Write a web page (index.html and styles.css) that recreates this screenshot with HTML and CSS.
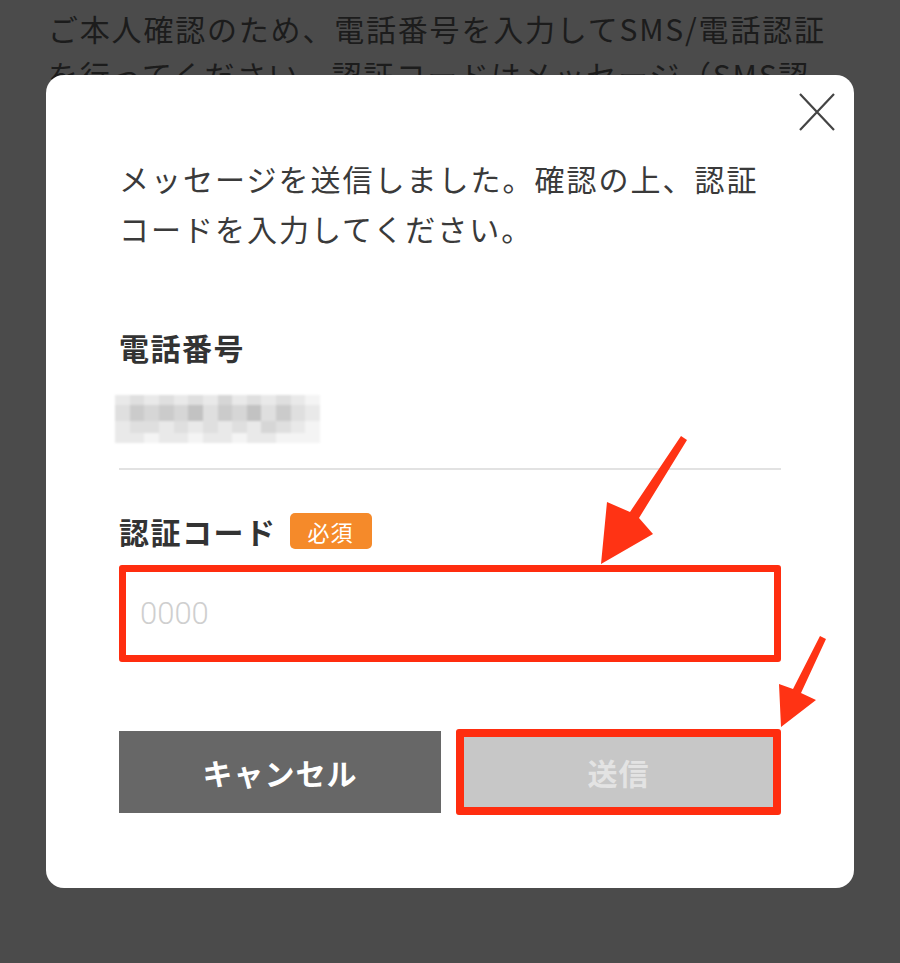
FILE: index.html
```html
<!DOCTYPE html>
<html lang="ja">
<head>
<meta charset="utf-8">
<title>認証コード入力</title>
<link rel="stylesheet" href="styles.css">
</head>
<body>
<div class="page">
  <p class="bg-text">ご本人確認のため、電話番号を入力してSMS/電話認証<br>を行ってください。認証コードはメッセージ（SMS認<br>証）または音声電話でお知らせします。</p>
</div>

<div class="modal">
  <button class="close" aria-label="閉じる">
    <svg width="38" height="40" viewBox="0 0 38 40"><path d="M2 2 L36 38 M36 2 L2 38" stroke="#444" stroke-width="2.2" fill="none"/></svg>
  </button>
  <p class="message">メッセージを送信しました。確認の上、認証<br>コードを入力してください。</p>

  <div class="label">電話番号</div>
  <div class="mosaic">
    <span class="c1"></span><span class="c2"></span><span class="c1"></span><span class="c2"></span><span class="c1"></span><span class="c2"></span><span class="c1"></span><span class="c3"></span><span class="c1"></span><span class="c2"></span><span class="c1"></span><span class="c2"></span><span class="c1"></span><span class="c0"></span>
    <span class="c2"></span><span class="c4"></span><span class="c3"></span><span class="c4"></span><span class="c3"></span><span class="c5"></span><span class="c2"></span><span class="c4"></span><span class="c3"></span><span class="c5"></span><span class="c2"></span><span class="c4"></span><span class="c2"></span><span class="c1"></span>
    <span class="c1"></span><span class="c2"></span><span class="c2"></span><span class="c1"></span><span class="c2"></span><span class="c1"></span><span class="c2"></span><span class="c1"></span><span class="c2"></span><span class="c1"></span><span class="c3"></span><span class="c2"></span><span class="c1"></span><span class="c0"></span>
    <span class="c1"></span><span class="c1"></span><span class="c0"></span><span class="c1"></span><span class="c1"></span><span class="c0"></span><span class="c1"></span><span class="c1"></span><span class="c0"></span><span class="c1"></span><span class="c1"></span><span class="c0"></span><span class="c0"></span><span class="c0"></span>
  </div>
  <div class="divider"></div>

  <div class="label-row">
    <span class="label">認証コード</span>
    <span class="badge">必須</span>
  </div>
  <div class="input-box"><span class="placeholder">0000</span></div>

  <div class="actions">
    <button class="btn cancel">キャンセル</button>
    <button class="btn send">送信</button>
  </div>
</div>

<svg class="arrows" width="900" height="963" viewBox="0 0 900 963">
  <polygon points="681,436 687,440 639,518 653,534 601,564 607,502 630,512" fill="#ff3314"/>
  <polygon points="820,636 826,639 801,693 816,700 781,727 779,684 793,689" fill="#ff3314"/>
</svg>
</body>
</html>
```

FILE: styles.css
```css
html, body {
  margin: 0;
  padding: 0;
}
body {
  background: #4b4b4b;
  width: 900px;
  height: 963px;
  overflow: hidden;
  position: relative;
  font-family: "Noto Sans CJK JP", "Noto Sans", sans-serif;
}
.page {
  padding: 5px 40px 0 48px;
}
.bg-text {
  margin: 0;
  color: #1c1c1c;
  font-size: 30px;
  line-height: 46px;
  letter-spacing: 1.8px;
  white-space: nowrap;
}

.modal {
  position: absolute;
  left: 46px;
  top: 75px;
  width: 808px;
  height: 813px;
  box-sizing: border-box;
  background: #fff;
  border-radius: 18px;
  padding: 78px 73px 0 73px;
  color: #333;
}
.close {
  position: absolute;
  top: 17px;
  right: 18px;
  padding: 0;
  border: 0;
  background: none;
  width: 38px;
  height: 40px;
}
.close svg { display: block; }

.message {
  margin: 0;
  font-size: 30px;
  line-height: 50px;
  letter-spacing: 2px;
  white-space: nowrap;
  color: #3a3a3a;
}
.label {
  margin-top: 74px;
  font-size: 30px;
  font-weight: 700;
  line-height: 40px;
  letter-spacing: 1.5px;
  color: #333;
}
.mosaic {
  margin-top: 28px;
  margin-left: -4px;
  width: 205px;
  height: 48px;
  display: grid;
  grid-template-columns: repeat(14, 1fr);
  grid-template-rows: 10px 16px 12px 10px;
  filter: blur(1px);
}
.mosaic .c0 { background: #f4f4f4; }
.mosaic .c1 { background: #e9e9e9; }
.mosaic .c2 { background: #dfdfdf; }
.mosaic .c3 { background: #d6d6d6; }
.mosaic .c4 { background: #cbcbcb; }
.mosaic .c5 { background: #c2c2c2; }

.divider {
  margin-top: 25px;
  height: 2px;
  background: #e2e2e2;
}
.label-row {
  margin-top: 41px;
  display: flex;
  align-items: center;
  gap: 13px;
  height: 40px;
}
.label-row .label {
  margin-top: 0;
}
.badge {
  background: #f58a2a;
  color: #fff;
  font-size: 22px;
  line-height: 36px;
  height: 36px;
  padding: 0 18px;
  border-radius: 5px;
  letter-spacing: 1px;
}
.input-box {
  margin-top: 14px;
  height: 97px;
  box-sizing: border-box;
  border: 7px solid #ff2d0f;
  border-radius: 3px;
  display: flex;
  align-items: center;
  padding-left: 14px;
}
.placeholder {
  font-family: Roboto, "Noto Sans", sans-serif;
  font-weight: 300;
  font-size: 31px;
  color: #cfcfcf;
}
.actions {
  margin-top: 67px;
  display: grid;
  grid-template-columns: 322px 1fr;
  gap: 15px;
  align-items: center;
}
.btn {
  border: 0;
  padding: 0;
  margin: 0;
  font-family: "Noto Sans CJK JP", "Noto Sans", sans-serif;
  font-size: 30px;
  font-weight: 700;
  letter-spacing: 1px;
}
.cancel {
  height: 82px;
  background: #676767;
  color: #fff;
}
.send {
  height: 86px;
  box-sizing: border-box;
  background: #c7c7c7;
  border: 8px solid #ff2d0f;
  border-radius: 3px;
  color: #e3e3e3;
}

.arrows {
  position: absolute;
  left: 0;
  top: 0;
  pointer-events: none;
}
```
